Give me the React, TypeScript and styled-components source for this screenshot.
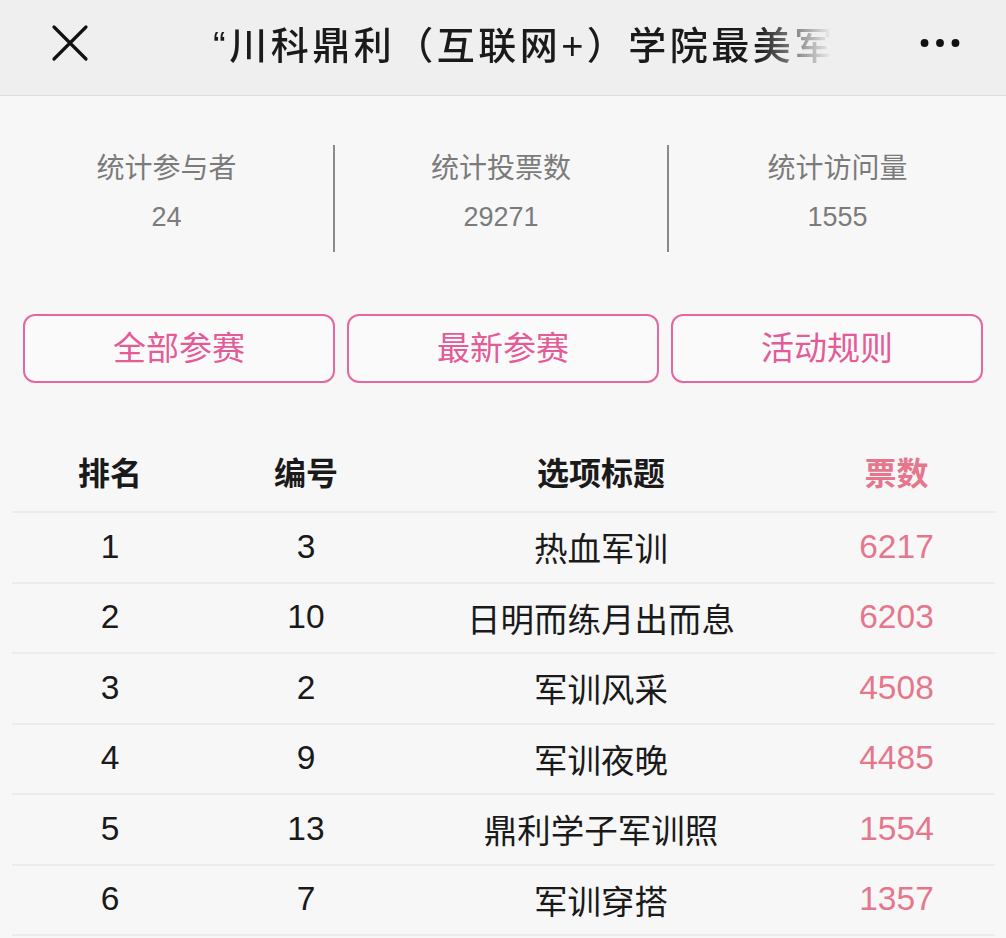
import styled, { createGlobalStyle } from "styled-components";

const GlobalStyle = createGlobalStyle`
  html, body {
    margin: 0;
    padding: 0;
    background-color: #f8f7f8;
  }
  body {
    font-family: "Liberation Sans", "Noto Sans CJK SC", sans-serif;
    color: #1c1c1c;
  }
  * {
    box-sizing: border-box;
  }
`;

const Page = styled.div`
  width: 1006px;
  min-height: 938px;
  overflow: hidden;
  background-color: #f8f7f8;
`;

const TopBar = styled.header`
  display: flex;
  align-items: center;
  height: 96px;
  padding: 0 46px 10px 50px;
  background-color: #efefef;
  border-bottom: 1px solid #dcdcdc;
`;

const IconButton = styled.div`
  display: flex;
  align-items: center;
  justify-content: center;
  flex-shrink: 0;
  width: 40px;
  height: 40px;
`;

const TitleBox = styled.div`
  flex: 1;
  margin: 0 88px 0 123px;
  overflow: hidden;
  white-space: nowrap;
  -webkit-mask-image: linear-gradient(to right, #000 88%, transparent 100%);
  mask-image: linear-gradient(to right, #000 88%, transparent 100%);
`;

const Title = styled.h1`
  margin: 0;
  font-size: 38px;
  font-weight: 500;
  letter-spacing: 3.5px;
  color: #1a1a1a;
`;

const Stats = styled.section`
  display: grid;
  grid-template-columns: 333px 334px 1fr;
  margin-top: 49px;
`;

interface IStatProps {
  divided?: boolean;
}

const Stat = styled.div<IStatProps>`
  display: flex;
  flex-direction: column;
  align-items: center;
  height: 107px;
  padding-top: 6px;
  border-left: ${props => props.divided ? "2px solid #8a8a8a" : "none"};
`;

const StatLabel = styled.div`
  font-size: 28px;
  line-height: 36px;
  color: #7b7b7b;
`;

const StatValue = styled.div`
  margin-top: 12px;
  font-size: 27px;
  line-height: 36px;
  color: #7b7b7b;
`;

const Tabs = styled.nav`
  display: grid;
  grid-template-columns: repeat(3, 1fr);
  gap: 12px;
  margin-top: 62px;
  padding: 0 23px;
`;

const Tab = styled.button`
  height: 69px;
  padding: 0 0 5px;
  border: 2px solid #e6679f;
  border-radius: 12px;
  background-color: #fbfafb;
  font-family: inherit;
  font-size: 33px;
  color: #e35b97;
  cursor: pointer;
`;

const Table = styled.div`
  margin: 51px 11px 0 12px;
`;

interface IRowProps {
  head?: boolean;
}

const Row = styled.div<IRowProps>`
  display: grid;
  grid-template-columns: 196px 196px 394px 1fr;
  align-items: center;
  height: ${props => props.head ? "79px" : "70.5px"};
  padding-bottom: ${props => props.head ? "4px" : "1px"};
  border-bottom: 2px solid #ececec;
  font-size: ${props => props.head ? "32px" : "33.5px"};
  font-weight: ${props => props.head ? 700 : 400};
`;

interface ICellProps {
  votes?: boolean;
}

const Cell = styled.div<ICellProps>`
  text-align: center;
  color: ${props => props.votes ? "#e5778d" : "#1a1a1a"};
`;

const items = [
  { rank: 1, id: 3, title: "热血军训", votes: 6217 },
  { rank: 2, id: 10, title: "日明而练月出而息", votes: 6203 },
  { rank: 3, id: 2, title: "军训风采", votes: 4508 },
  { rank: 4, id: 9, title: "军训夜晚", votes: 4485 },
  { rank: 5, id: 13, title: "鼎利学子军训照", votes: 1554 },
  { rank: 6, id: 7, title: "军训穿搭", votes: 1357 },
];

function App() {
  return (
    <Page>
      <GlobalStyle />
      <TopBar>
        <IconButton>
          <svg width="38" height="38" viewBox="0 0 38 38">
            <path d="M3 3 L35 35 M35 3 L3 35" stroke="#111" strokeWidth="3.2" strokeLinecap="round" />
          </svg>
        </IconButton>
        <TitleBox>
          <Title>“川科鼎利（互联网+）学院最美军训照”评选</Title>
        </TitleBox>
        <IconButton>
          <svg width="44" height="12" viewBox="0 0 44 12">
            <circle cx="5" cy="6" r="4.3" fill="#111" />
            <circle cx="22" cy="6" r="4.3" fill="#111" />
            <circle cx="39" cy="6" r="4.3" fill="#111" />
          </svg>
        </IconButton>
      </TopBar>

      <Stats>
        <Stat>
          <StatLabel>统计参与者</StatLabel>
          <StatValue>24</StatValue>
        </Stat>
        <Stat divided>
          <StatLabel>统计投票数</StatLabel>
          <StatValue>29271</StatValue>
        </Stat>
        <Stat divided>
          <StatLabel>统计访问量</StatLabel>
          <StatValue>1555</StatValue>
        </Stat>
      </Stats>

      <Tabs>
        <Tab>全部参赛</Tab>
        <Tab>最新参赛</Tab>
        <Tab>活动规则</Tab>
      </Tabs>

      <Table>
        <Row head>
          <Cell>排名</Cell>
          <Cell>编号</Cell>
          <Cell>选项标题</Cell>
          <Cell votes>票数</Cell>
        </Row>
        {items.map(item =>
          <Row key={item.rank}>
            <Cell>{item.rank}</Cell>
            <Cell>{item.id}</Cell>
            <Cell>{item.title}</Cell>
            <Cell votes>{item.votes}</Cell>
          </Row>
        )}
      </Table>
    </Page>
  );
}

export default App;
